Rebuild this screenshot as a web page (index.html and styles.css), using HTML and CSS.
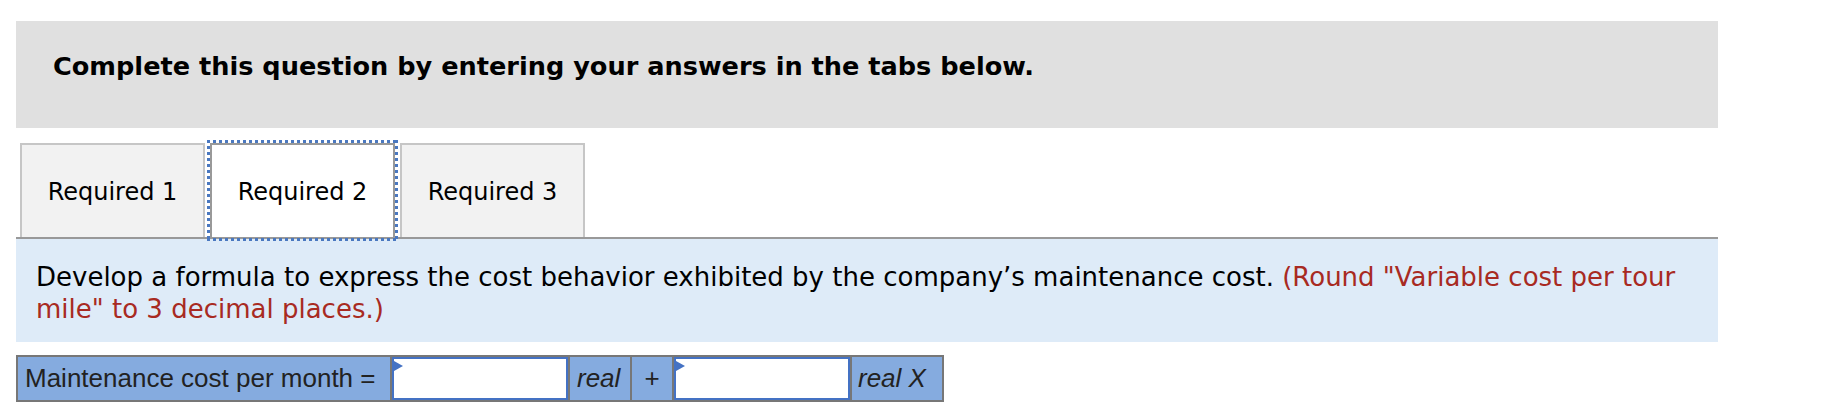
FILE: index.html
```html
<!DOCTYPE html>
<html lang="en">
<head>
<meta charset="utf-8">
<title>Question</title>
<link rel="stylesheet" href="styles.css">
</head>
<body>
<div class="page">
  <div class="banner">Complete this question by entering your answers in the tabs below.</div>
  <div class="tabs">
    <div class="tab">Required 1</div>
    <div class="tab active">Required 2</div>
    <div class="tab">Required 3</div>
  </div>
  <div class="panel">Develop a formula to express the cost behavior exhibited by the company’s maintenance cost. <span class="note">(Round "Variable cost per tour mile" to 3 decimal places.)</span></div>
  <div class="formula">
    <div class="cell label">Maintenance cost per month =</div>
    <div class="cell input"><span class="flag"></span></div>
    <div class="cell unit real">real</div>
    <div class="cell unit plus">+</div>
    <div class="cell input"><span class="flag"></span></div>
    <div class="cell unit realx">real X</div>
  </div>
</div>
</body>
</html>
```
FILE: styles.css
```css
html, body {
  margin: 0;
  padding: 0;
  background: #ffffff;
}
.page {
  width: 1702px;
  margin-left: 16px;
  padding-top: 21px;
  font-family: "DejaVu Sans", Verdana, sans-serif;
  color: #000;
}
.banner {
  box-sizing: border-box;
  height: 107px;
  background: #e0e0e0;
  padding: 31px 0 0 37px;
  font-weight: bold;
  font-size: 25.6px;
  line-height: 28px;
}
.tabs {
  display: flex;
  margin-top: 15px;
  padding-left: 4px;
  border-bottom: 2px solid #999999;
}
.tab {
  box-sizing: border-box;
  width: 185px;
  height: 94px;
  margin-right: 5px;
  background: #f2f2f2;
  border: 2px solid #c6c6c6;
  border-bottom: none;
  display: flex;
  align-items: center;
  justify-content: center;
  font-size: 24px;
  padding-top: 2px;
  position: relative;
}
.tab.active {
  background: #ffffff;
  border-color: #999999;
}
.tab.active::after {
  content: "";
  position: absolute;
  left: -5px;
  right: -5px;
  top: -5px;
  bottom: -4px;
  background:
    repeating-linear-gradient(90deg, #4a78c0 0 3px, transparent 3px 6px) left top / 100% 3px no-repeat,
    repeating-linear-gradient(90deg, #4a78c0 0 3px, transparent 3px 6px) left bottom / 100% 3px no-repeat,
    repeating-linear-gradient(180deg, #4a78c0 0 3px, transparent 3px 6px) left top / 3px 100% no-repeat,
    repeating-linear-gradient(180deg, #4a78c0 0 3px, transparent 3px 6px) right top / 3px 100% no-repeat;
}
.panel {
  background: #deebf8;
  padding: 22px 24px 17px 20px;
  font-size: 26px;
  line-height: 32px;
}
.note {
  color: #a82a22;
}
.formula {
  display: inline-flex;
  margin-top: 13px;
  background: #777777;
  padding: 2px;
  gap: 2px;
  height: 47px;
  box-sizing: border-box;
  font-family: "Liberation Sans", Arial, sans-serif;
  font-size: 26px;
  color: #222222;
}
.cell {
  display: flex;
  align-items: center;
  background: #85abdf;
  box-sizing: border-box;
}
.label {
  width: 372px;
  padding-left: 7px;
}
.input {
  width: 176px;
  background: #ffffff;
  border: 2px solid #4472c4;
  position: relative;
}
.flag {
  position: absolute;
  left: 0;
  top: 2px;
  width: 0;
  height: 0;
  border-top: 5.5px solid transparent;
  border-bottom: 5.5px solid transparent;
  border-left: 9px solid #4472c4;
}
.unit {
  font-style: italic;
}
.real {
  width: 60px;
  padding-left: 7px;
}
.plus {
  width: 40px;
  font-style: normal;
  justify-content: center;
}
.realx {
  width: 90px;
  padding-left: 6px;
}
```
